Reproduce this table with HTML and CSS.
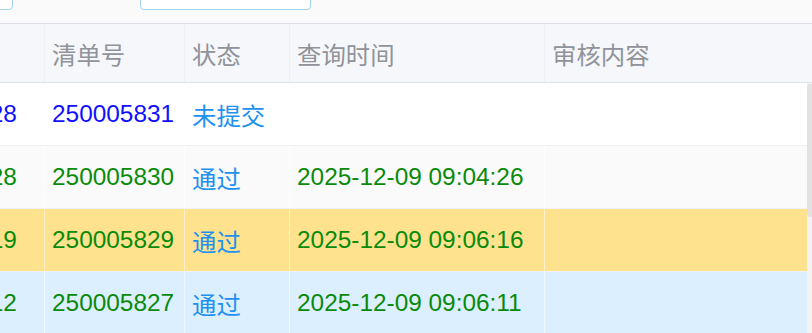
FILE: index.html
```html
<!DOCTYPE html>
<html lang="zh-CN">
<head>
  <meta charset="UTF-8">
  <title>审核清单</title>
  <link rel="stylesheet" href="styles.css">
</head>
<body>
  <div class="toolbar">
    <div class="input input-short"></div>
    <div class="input input-long"></div>
  </div>

  <div class="table">
    <div class="thead">
      <div class="row head-row">
        <div class="cell"></div>
        <div class="cell">清单号</div>
        <div class="cell">状态</div>
        <div class="cell">查询时间</div>
        <div class="cell">审核内容</div>
      </div>
    </div>

    <div class="tbody">
      <div class="rows">
        <div class="row draft">
          <div class="cell">00028</div>
          <div class="cell">250005831</div>
          <div class="cell status">未提交</div>
          <div class="cell"></div>
          <div class="cell"></div>
        </div>
        <div class="row striped done">
          <div class="cell">00028</div>
          <div class="cell">250005830</div>
          <div class="cell status">通过</div>
          <div class="cell">2025-12-09 09:04:26</div>
          <div class="cell"></div>
        </div>
        <div class="row current done">
          <div class="cell">00019</div>
          <div class="cell">250005829</div>
          <div class="cell status">通过</div>
          <div class="cell">2025-12-09 09:06:16</div>
          <div class="cell"></div>
        </div>
        <div class="row hover done">
          <div class="cell">00012</div>
          <div class="cell">250005827</div>
          <div class="cell status">通过</div>
          <div class="cell">2025-12-09 09:06:11</div>
          <div class="cell"></div>
        </div>
      </div>
      <div class="scrollbar"><div class="thumb"></div></div>
    </div>
  </div>
</body>
</html>
```

FILE: styles.css
```css
body {
  margin: 0;
  font-family: "Liberation Sans", "Noto Sans CJK SC", sans-serif;
  font-size: 24.4px;
  background: #fff;
  overflow: hidden;
}

/* search bar above the table, scrolled partly out of view */
.toolbar {
  height: 23px;
  background: #fafafa;
  display: flex;
  gap: 127px;
  overflow: hidden;
}
.input {
  height: 28px;
  margin-top: -18px;
  background: #fff;
  border: 1px solid #a6d2f2;
  border-radius: 4px;
  box-sizing: border-box;
}
.input-short {
  width: 100px;
  margin-left: -87px;
}
.input-long {
  width: 171px;
}

.table {
  border-top: 1px solid #dcdfe6;
  overflow: hidden;
}

.row {
  display: grid;
  grid-template-columns: 103px 140px 105px 255px 1fr;
  margin-left: -58px;
  height: 63px;
  border-bottom: 1px solid #f0f1f4;
  box-sizing: border-box;
}
.cell {
  display: flex;
  align-items: center;
  padding: 0 7px;
  border-right: 1px solid rgba(255, 255, 255, 0.55);
  white-space: nowrap;
  overflow: hidden;
}
.cell:last-child {
  border-right: none;
}

.head-row {
  height: 59px;
  background: #f5f7fa;
  color: #909399;
  border-bottom: 1px solid #dfe2e8;
}
.head-row .cell {
  border-right-color: #eef0f4;
}

.tbody {
  display: flex;
}
.rows {
  flex: 1;
  overflow: hidden;
}

.draft { color: #1010ff; }
.done { color: #0a8a0a; }
.status { color: #2191f0; }

.striped { background: #fafafa; }
.current { background: #fee28d; }
.hover { background: #dcefff; }

.scrollbar {
  width: 5px;
  background: #f3f3f3;
}
.thumb {
  height: 133px;
  margin-top: 1px;
  background: #e2e2e2;
  border-radius: 3px 0 0 3px;
}
```
